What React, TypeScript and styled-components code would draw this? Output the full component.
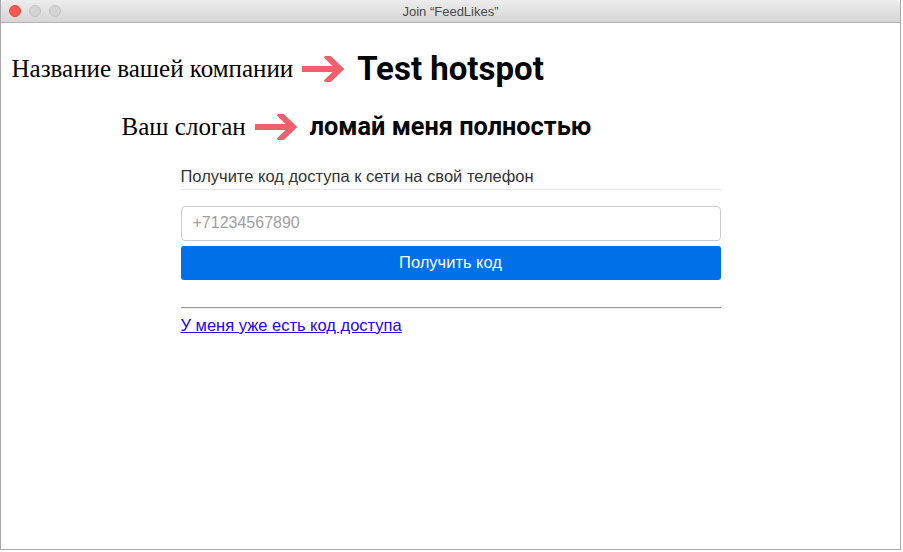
import React from "react";
import styled, { createGlobalStyle } from "styled-components";

const Global = createGlobalStyle`
  html, body { margin: 0; padding: 0; background: #ffffff; }
  body { font-family: "Liberation Sans", Arial, sans-serif; }
`;

const Window = styled.div`
  width: 901px;
  height: 550px;
  box-sizing: border-box;
  border-left: 1px solid #a8a8a8;
  border-right: 1px solid #a8a8a8;
  border-bottom: 1px solid #a8a8a8;
  display: flex;
  flex-direction: column;
  overflow: hidden;
`;

const TitleBar = styled.div`
  height: 23px;
  flex: 0 0 23px;
  box-sizing: border-box;
  background: linear-gradient(#ececec, #d6d6d6);
  border-bottom: 1px solid #b4b4b4;
  border-top-left-radius: 5px;
  border-top-right-radius: 5px;
  position: relative;
  display: flex;
  align-items: center;
  justify-content: center;
`;

const Lights = styled.div`
  position: absolute;
  left: 8px;
  top: 5px;
  display: flex;
  gap: 8px;
`;

const Light = styled.span<{ $c: string; $b: string }>`
  width: 12px;
  height: 12px;
  border-radius: 50%;
  box-sizing: border-box;
  background: ${(p) => p.$c};
  border: 1px solid ${(p) => p.$b};
`;

const Title = styled.div`
  font-family: "Liberation Sans", Arial, sans-serif;
  font-size: 13px;
  color: #4a4a4a;
`;

const Content = styled.div`
  flex: 1;
  background: #fff;
  display: flex;
  flex-direction: column;
  align-items: center;
  padding-top: 26px;
`;

const HeadingRow = styled.div<{ $mt: number }>`
  position: relative;
  margin-top: ${(p) => p.$mt}px;
`;

const Heading = styled.div<{ $size: number }>`
  font-family: Roboto, "Liberation Sans", sans-serif;
  font-weight: 700;
  font-size: ${(p) => p.$size}px;
  line-height: 1.2;
  color: #000;
  white-space: nowrap;
`;

const Annotation = styled.div`
  position: absolute;
  right: 100%;
  top: 50%;
  transform: translateY(-50%);
  margin-right: 11px;
  display: flex;
  align-items: center;
  gap: 9px;
  white-space: nowrap;
`;

const AnnoText = styled.span`
  font-family: "Liberation Serif", "Times New Roman", serif;
  font-size: 25px;
  color: #000;
`;

const Arrow = () => (
  <svg width="44" height="26" viewBox="0 0 44 26">
    <path d="M0 13 H38" stroke="#f0606c" strokeWidth="6" fill="none" />
    <path d="M26 1.5 L38 13 L26 24.5" stroke="#f0606c" strokeWidth="6" fill="none" strokeLinecap="square" />
  </svg>
);

const Form = styled.div`
  width: 540px;
  margin-top: 25px;
  display: flex;
  flex-direction: column;
`;

const Legend = styled.div`
  font-size: 16.5px;
  color: #333;
  padding-bottom: 3px;
  border-bottom: 1px solid #e5e5e5;
`;

const Input = styled.input`
  margin-top: 16px;
  height: 35px;
  box-sizing: border-box;
  border: 1px solid #cccccc;
  border-radius: 4px;
  padding: 0 11px;
  font-family: "Liberation Sans", Arial, sans-serif;
  font-size: 16px;
  color: #333;
  outline: none;
  &::placeholder { color: #a0a0a0; }
`;

const Button = styled.button`
  margin-top: 5px;
  height: 34px;
  border: none;
  border-radius: 3px;
  background: #0070e8;
  color: #fff;
  font-family: "Liberation Sans", Arial, sans-serif;
  font-size: 16.5px;
  cursor: pointer;
`;

const Rule = styled.hr`
  margin: 27px 0 0;
  border: none;
  border-top: 1px solid #9a9a9a;
  border-bottom: 1px solid #eeeeee;
  height: 0;
`;

const Link = styled.a`
  margin-top: 7px;
  font-size: 16.5px;
  color: #2a00ee;
  text-decoration: underline;
  align-self: flex-start;
`;

export default function App() {
  return (
    <>
      <Global />
      <Window>
        <TitleBar>
          <Lights>
            <Light $c="#fc5753" $b="#e0443e" />
            <Light $c="#d4d4d4" $b="#c2c2c2" />
            <Light $c="#d4d4d4" $b="#c2c2c2" />
          </Lights>
          <Title>Join “FeedLikes”</Title>
        </TitleBar>
        <Content>
          <HeadingRow $mt={0}>
            <Annotation>
              <AnnoText>Название вашей компании</AnnoText>
              <Arrow />
            </Annotation>
            <Heading $size={33}>Test hotspot</Heading>
          </HeadingRow>
          <HeadingRow $mt={23}>
            <Annotation>
              <AnnoText>Ваш слоган</AnnoText>
              <Arrow />
            </Annotation>
            <Heading $size={25.3}>ломай меня полностью</Heading>
          </HeadingRow>
          <Form>
            <Legend>Получите код доступа к сети на свой телефон</Legend>
            <Input placeholder="+71234567890" />
            <Button>Получить код</Button>
            <Rule />
            <Link href="#">У меня уже есть код доступа</Link>
          </Form>
        </Content>
      </Window>
    </>
  );
}
